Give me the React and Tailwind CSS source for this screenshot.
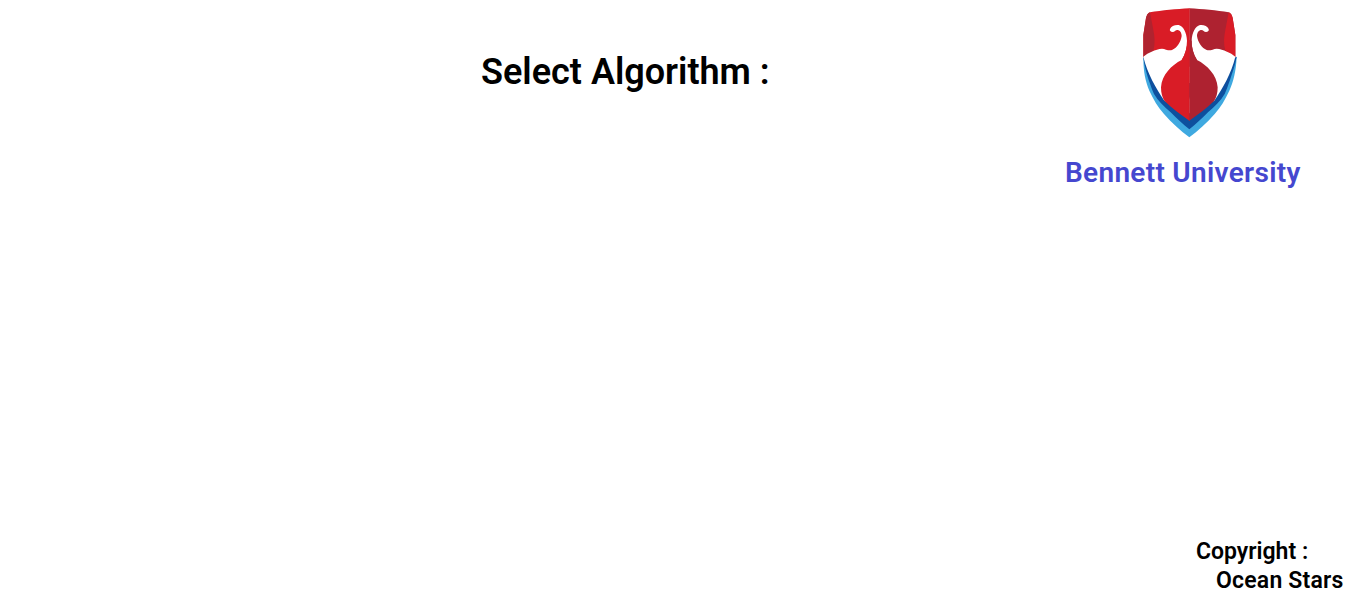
import React from 'react';

function ShieldHalf({ corner, main, onion }) {
  return (
    <>
      <path d="M178 25 C140 27 95 31 60 37 C54 39 50 46 48 54 L40 105 L40 172 L178 200 Z" fill={main} />
      <path d="M60 37 C54 39 50 46 48 54 L40 105 L40 172 L70 152 C76 130 74 110 70 90 Z" fill={corner} />
      <path
        d="M40 170 C48 163 56 158 65 155 C76 150 86 146 96 146 C106 147 116 153 126 150 C140 144 152 128 155 108 C155 96 148 90 142 90 C136 90 134 96 128 96 C122 96 118 92 120 87 C124 78 134 74 146 75 C160 78 170 98 171 122 C172 140 166 162 155 180 L178 300 L178 340 L103 302 C78 265 52 220 40 170 Z"
        fill="#ffffff"
      />
      <path
        d="M178 120 L171 122 C172 140 166 162 155 180 C125 195 95 225 93 262 C93 280 97 292 103 302 C125 325 155 345 178 362 Z"
        fill={onion}
      />
    </>
  );
}

function Shield() {
  return (
    <svg width="120" height="145" viewBox="0 0 360 435">
      <path d="M40 172 C40 215 46 245 58 272 C70 298 84 322 102 342 C125 368 152 393 178 412 C204 393 231 368 254 342 C272 322 286 298 298 272 C310 245 318 215 320 170 L178 250 Z" fill="#3fa9e0" />
      <path d="M40 172 C42 195 50 220 56 240 C62 255 66 270 72 282 C84 302 102 320 122 337 C140 355 158 372 178 388 C198 372 216 355 234 337 C254 320 272 302 284 282 C290 270 294 255 300 240 C306 220 316 195 320 170 L178 250 Z" fill="#0d4f9e" />
      <ShieldHalf corner="#b0232f" main="#d91c26" onion="#d91c26" />
      <g transform="translate(356 0) scale(-1 1)">
        <ShieldHalf corner="#d91c26" main="#ae2230" onion="#ae2230" />
      </g>
      <path d="M178 25 L178 362" stroke="#d91c26" strokeWidth="2" />
    </svg>
  );
}

export default function App() {
  return (
    <div className="h-[593px] bg-white font-['Roboto',sans-serif] font-semibold overflow-hidden">
      <div className="flex h-[537px]">
        <div className="w-[1065px] pt-[50px] pl-[481px]">
          <h1 className="text-[36px] leading-[44px] text-black">Select Algorithm :</h1>
        </div>
        <div>
          <div className="pl-[65px]">
            <Shield />
          </div>
          <p className="mt-[11px] text-[28px] leading-[34px] tracking-[0.3px] text-[#4547cf] whitespace-nowrap">Bennett University</p>
        </div>
      </div>
      <div className="text-[23px] leading-[29px] text-black pl-[1196px]">
        <p>Copyright :</p>
        <p className="pl-5 tracking-[0.2px]">Ocean Stars</p>
      </div>
    </div>
  );
}
